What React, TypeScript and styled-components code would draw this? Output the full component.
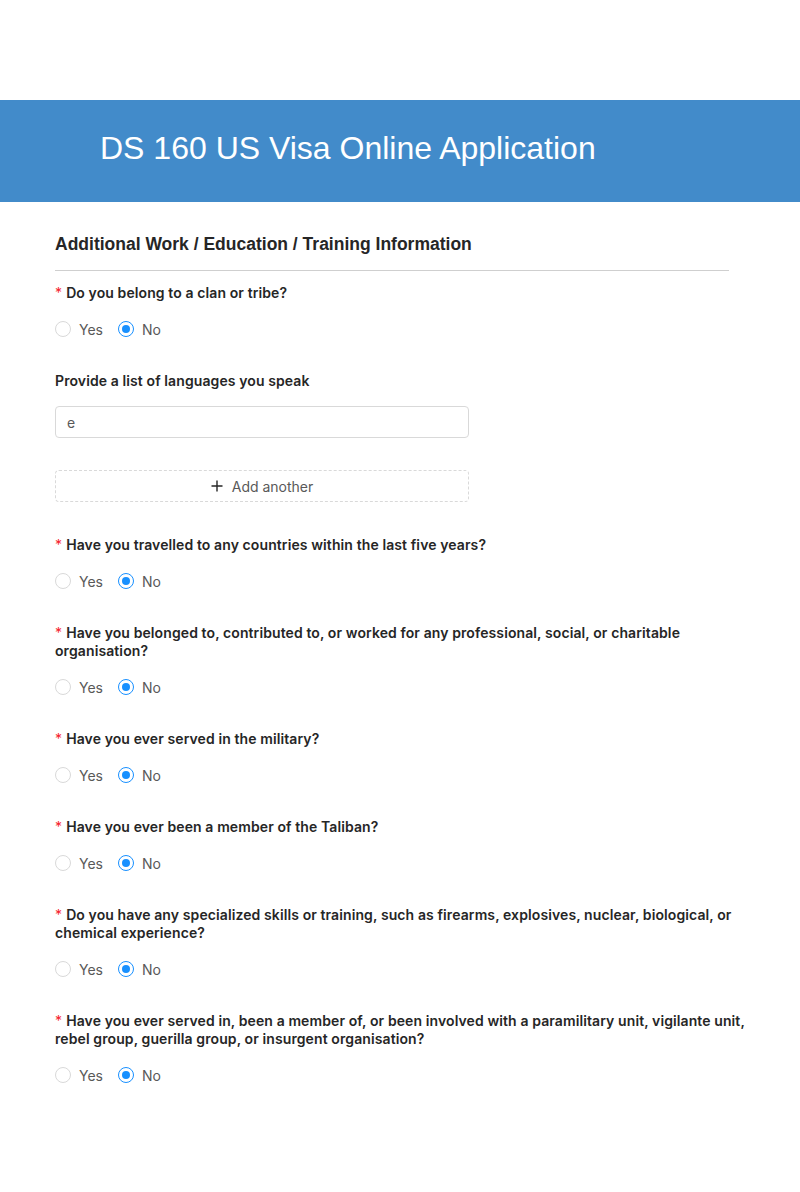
import styled, { createGlobalStyle } from 'styled-components';

const GlobalStyle = createGlobalStyle`
    body {
        margin: 0;
        background: #ffffff;
        font-family: Inter, "Noto Sans", sans-serif;
    }
`;

const Page = styled.div`
    padding-top: 100px;
    padding-bottom: 90px;
`;

const Banner = styled.header`
    box-sizing: border-box;
    height: 102px;
    background-color: #428bca;
    display: flex;
    align-items: center;
    padding-left: 100px;
    padding-bottom: 6px;
`;

const Title = styled.h1`
    margin: 0;
    font-family: "Liberation Sans", Arial, sans-serif;
    font-weight: 400;
    font-size: 32px;
    color: #ffffff;
`;

const Body = styled.main`
    padding: 30px 55px 0 55px;
`;

const SectionTitle = styled.h2`
    margin: 0;
    font-family: "Liberation Sans", Arial, sans-serif;
    font-weight: 700;
    font-size: 17.5px;
    line-height: 24px;
    color: #262626;
    width: 674px;
    padding-bottom: 14px;
    border-bottom: 1px solid #cfcfcf;
    margin-bottom: 13px;
`;

const Field = styled.div<{ $gap?: number }>`
    margin-bottom: ${(p) => p.$gap ?? 26}px;
    max-width: 690px;
`;

const Label = styled.div<{ $space?: number }>`
    font-size: 14px;
    font-weight: 600;
    letter-spacing: 0.1px;
    line-height: 18px;
    color: #262626;
    margin-bottom: ${(p) => p.$space ?? 10}px;
`;

const Star = styled.span`
    color: #f5222d;
    margin-right: 4px;
    font-weight: 400;
`;

const RadioRow = styled.div`
    display: flex;
    align-items: center;
    gap: 15px;
    height: 34px;
`;

const Option = styled.label`
    display: flex;
    align-items: center;
    gap: 8px;
    font-size: 14px;
    color: #595959;
`;

const Circle = styled.span<{ $on?: boolean }>`
    box-sizing: border-box;
    width: 16px;
    height: 16px;
    border-radius: 50%;
    border: 1px solid ${(p) => (p.$on ? '#1890ff' : '#d9d9d9')};
    display: flex;
    align-items: center;
    justify-content: center;

    &::after {
        content: '';
        width: 8px;
        height: 8px;
        border-radius: 50%;
        background: #1890ff;
        display: ${(p) => (p.$on ? 'block' : 'none')};
    }
`;

const TextInput = styled.div`
    box-sizing: border-box;
    width: 414px;
    height: 32px;
    border: 1px solid #d9d9d9;
    border-radius: 4px;
    padding: 0 11px;
    display: flex;
    align-items: center;
    font-size: 14px;
    color: #595959;
`;

const AddButton = styled.button`
    box-sizing: border-box;
    width: 414px;
    height: 32px;
    margin-top: 32px;
    border: 1px dashed #d9d9d9;
    border-radius: 4px;
    background: #ffffff;
    display: flex;
    align-items: center;
    justify-content: center;
    gap: 9px;
    font-family: Inter, "Noto Sans", sans-serif;
    font-size: 14px;
    color: #595959;
`;

function YesNo() {
    return (
        <RadioRow>
            <Option><Circle />Yes</Option>
            <Option><Circle $on />No</Option>
        </RadioRow>
    );
}

const questions = [
    'Have you travelled to any countries within the last five years?',
    'Have you belonged to, contributed to, or worked for any professional, social, or charitable organisation?',
    'Have you ever served in the military?',
    'Have you ever been a member of the Taliban?',
    'Do you have any specialized skills or training, such as firearms, explosives, nuclear, biological, or chemical experience?',
    'Have you ever served in, been a member of, or been involved with a paramilitary unit, vigilante unit, rebel group, guerilla group, or insurgent organisation?',
];

export default function App() {
    return (
        <>
            <GlobalStyle />
            <Page>
                <Banner>
                    <Title>DS 160 US Visa Online Application</Title>
                </Banner>
                <Body>
                    <SectionTitle>Additional Work / Education / Training Information</SectionTitle>

                    <Field>
                        <Label><Star>*</Star>Do you belong to a clan or tribe?</Label>
                        <YesNo />
                    </Field>

                    <Field $gap={34}>
                        <Label $space={16}>Provide a list of languages you speak</Label>
                        <TextInput>e</TextInput>
                        <AddButton>
                            <svg width="12" height="12" viewBox="0 0 12 12">
                                <path d="M6 0.5v11M0.5 6h11" stroke="#262626" strokeWidth="1.4" />
                            </svg>
                            Add another
                        </AddButton>
                    </Field>

                    {questions.map((q) => (
                        <Field key={q}>
                            <Label><Star>*</Star>{q}</Label>
                            <YesNo />
                        </Field>
                    ))}
                </Body>
            </Page>
        </>
    );
}
